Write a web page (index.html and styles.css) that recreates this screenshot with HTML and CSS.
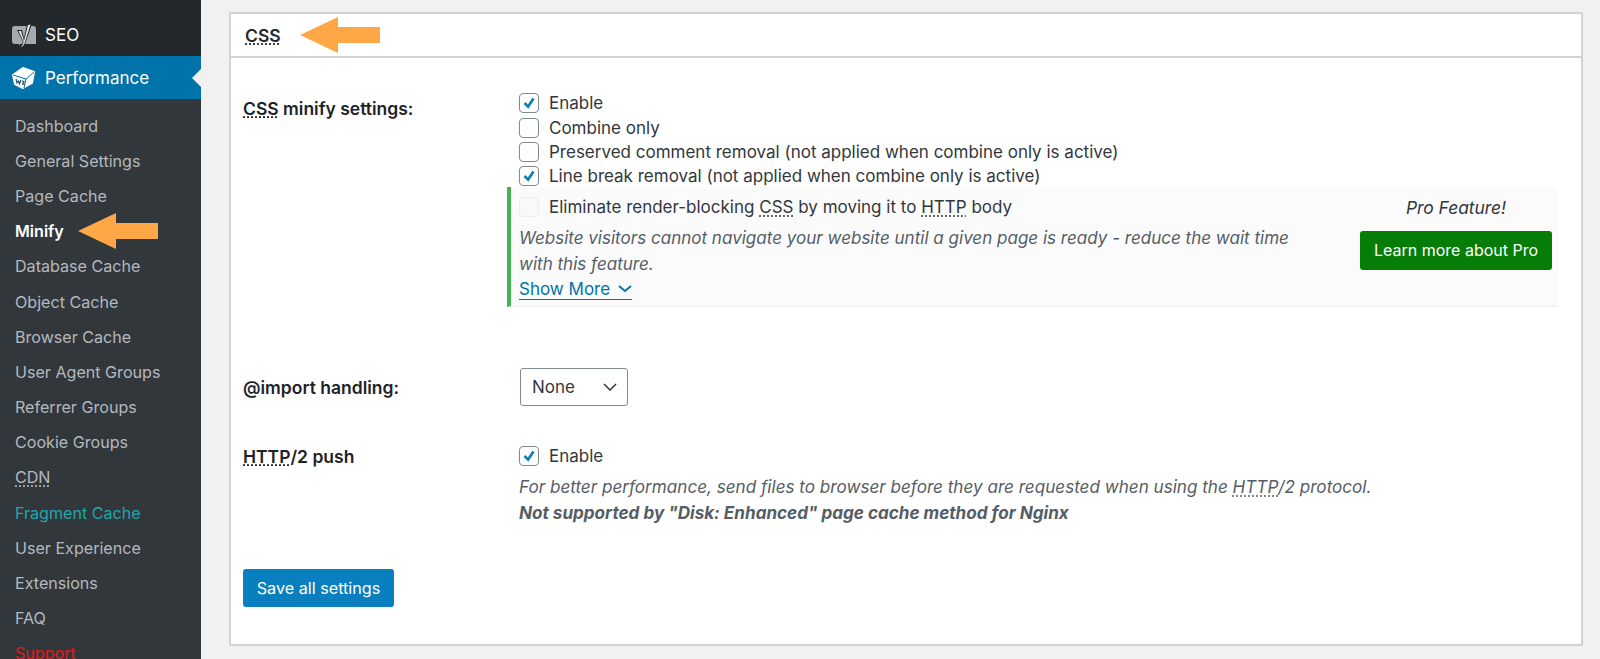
FILE: index.html
```html
<!DOCTYPE html>
<html lang="en">

<head>
    <meta charset="UTF-8">
    <meta name="viewport" content="width=device-width, initial-scale=1.0">
    <title>Minify</title>
    <link rel="stylesheet" href="styles.css">
</head>

<body>
    <div class="wrap">
        <!-- sidebar -->
        <nav class="side">
            <a href="#" class="top-item seo">
                <svg class="top-icon" viewBox="0 0 24 26" width="24" height="26">
                    <path d="M3 4h18c2 0 3 1 3 3v15H8l-1 2v-2H3c-2 0-3-1-3-3V7c0-2 1-3 3-3z" fill="#a7aaad"/>
                    <path d="M5 8h5l2 8 3-14h5l-7 20c-1 2-2 3-5 4l-1-2c2-1 3-2 4-4z" fill="#23282d"/>
                    <path d="M6.500 9h2.500l3 10 4-16 2.500-.5-6 19c-1 2-2 3-4 4 2-2 3-4 3-6z" fill="#e4e4e4"/>
                </svg>
                <span>SEO</span>
            </a>
            <a href="#" class="top-item perf">
                <svg class="top-icon" viewBox="0 0 24 24" width="24" height="24">
                    <path d="M11 2l11 4-2 11-9 5-8-4-2-9z" fill="#fff" stroke="#fff" stroke-width="2" stroke-linejoin="round"/>
                    <path d="M1 9l13 4 8-7M14 13l-2 9" fill="none" stroke="#0073aa" stroke-width="1"/>
                    <path d="M4 13l1 4 1.500-2 1 3 1.500-4M10 15l2 .5-1 1.500 1 1-2 .5" fill="none" stroke="#23506e" stroke-width="1.200"/>
                </svg>
                <span>Performance</span>
            </a>
            <ul class="sub">
                <li><a href="#">Dashboard</a></li>
                <li><a href="#">General Settings</a></li>
                <li><a href="#">Page Cache</a></li>
                <li class="current">
                    <a href="#">Minify</a>
                    <svg class="arrow" viewBox="0 0 80 36" width="80" height="36"><path d="M0 18L38 0v10h42v16H38v10z"/></svg>
                </li>
                <li><a href="#">Database Cache</a></li>
                <li><a href="#">Object Cache</a></li>
                <li><a href="#">Browser Cache</a></li>
                <li><a href="#">User Agent Groups</a></li>
                <li><a href="#">Referrer Groups</a></li>
                <li><a href="#">Cookie Groups</a></li>
                <li><a href="#"><abbr>CDN</abbr></a></li>
                <li class="teal"><a href="#">Fragment Cache</a></li>
                <li><a href="#">User Experience</a></li>
                <li><a href="#">Extensions</a></li>
                <li><a href="#">FAQ</a></li>
                <li class="red"><a href="#">Support</a></li>
            </ul>
        </nav>

        <!-- main -->
        <main class="content">
            <section class="card">
                <h2 class="card-head">
                    <abbr>CSS</abbr>
                    <svg class="arrow" viewBox="0 0 80 36" width="80" height="36"><path d="M0 18L38 0v10h42v16H38v10z"/></svg>
                </h2>
                <div class="card-body">
                    <div class="row row-minify">
                        <div class="label"><abbr>CSS</abbr> minify settings:</div>
                        <div class="field">
                            <label class="check"><span class="box on"><svg viewBox="0 0 20 20"><path d="M5 10l4 4 6-9"/></svg></span>Enable</label>
                            <label class="check"><span class="box"></span>Combine only</label>
                            <label class="check"><span class="box"></span>Preserved comment removal (not applied when combine only is active)</label>
                            <label class="check"><span class="box on"><svg viewBox="0 0 20 20"><path d="M5 10l4 4 6-9"/></svg></span>Line break removal (not applied when combine only is active)</label>
                            <div class="pro">
                                <div class="pro-main">
                                    <label class="check"><span class="box off"></span><span>Eliminate render-blocking <abbr>CSS</abbr> by moving it to <abbr>HTTP</abbr> body</span></label>
                                    <p class="desc">Website visitors cannot navigate your website until a given page is ready - reduce the wait time with this feature.</p>
                                    <a href="#" class="more">Show More <svg viewBox="0 0 14 8" width="14" height="8"><path d="M1 1l6 5 6-5"/></svg></a>
                                </div>
                                <div class="pro-side">
                                    <em>Pro Feature!</em>
                                    <a href="#" class="btn-green">Learn more about Pro</a>
                                </div>
                            </div>
                        </div>
                    </div>
                    <div class="row row-import">
                        <div class="label">@import handling:</div>
                        <div class="field">
                            <div class="select">None<svg viewBox="0 0 14 8" width="14" height="8"><path d="M1 1l6 6 6-6"/></svg></div>
                        </div>
                    </div>
                    <div class="row row-push">
                        <div class="label"><abbr>HTTP</abbr>/2 push</div>
                        <div class="field">
                            <label class="check"><span class="box on"><svg viewBox="0 0 20 20"><path d="M5 10l4 4 6-9"/></svg></span>Enable</label>
                            <p class="note">For better performance, send files to browser before they are requested when using the <abbr>HTTP</abbr>/2 protocol.</p>
                            <p class="note"><strong>Not supported by "Disk: Enhanced" page cache method for Nginx</strong></p>
                        </div>
                    </div>
                    <a href="#" class="btn-blue">Save all settings</a>
                </div>
            </section>
        </main>
    </div>
</body>

</html>
```

FILE: styles.css
```css
* {
    box-sizing: border-box;
}

html,
body {
    margin: 0;
    height: 659px;
    overflow: hidden;
}

body {
    background: #f1f1f1;
    color: #23282d;
    font-family: Inter, "Liberation Sans", sans-serif;
    font-size: 17px;
}

a {
    text-decoration: none;
}

abbr {
    text-decoration: underline dotted;
    text-underline-offset: 2px;
}

.wrap {
    display: flex;
    height: 659px;
}

/* sidebar */
.side {
    width: 201px;
    flex: none;
    background: #32373c;
    overflow: hidden;
}

.top-item {
    display: flex;
    align-items: center;
    gap: 9px;
    padding-left: 12px;
    color: #fff;
    font-size: 17px;
}

.top-icon {
    flex: none;
}

.seo {
    height: 56px;
    padding-top: 14px;
    background: #23282d;
}

.perf {
    position: relative;
    height: 43px;
    background: #0073aa;
}

.perf::after {
    content: "";
    position: absolute;
    right: 0;
    top: 13px;
    border: 9px solid transparent;
    border-left: 0;
    border-right-color: #f1f1f1;
}

.sub {
    list-style: none;
    margin: 0;
    padding: 9px 0 0 15px;
}

.sub li {
    display: flex;
    align-items: center;
    height: 35.2px;
    gap: 14px;
}

.sub a {
    color: #b4b9be;
    font-size: 16.100px;
}

.sub .current a {
    color: #fff;
    font-weight: 600;
}

.sub .teal a {
    color: #1fa7ad;
}

.sub .red a {
    color: #e3181d;
}

.arrow {
    flex: none;
    fill: #ffa647;
}

/* card */
.content {
    flex: 1;
    padding: 12px 17px 0 28px;
}

.card {
    height: 634px;
    background: #fff;
    border: 2px solid #d3d3d3;
}

.card-head {
    display: flex;
    align-items: center;
    gap: 19px;
    height: 44px;
    margin: 0;
    padding-left: 14px;
    border-bottom: 2px solid #d3d3d3;
    color: #23282d;
    font-size: 17.500px;
    font-weight: 600;
}

.card-body {
    padding: 33px 12px 0;
}

.row {
    display: flex;
}

.label {
    width: 276px;
    flex: none;
    padding-top: 7px;
    color: #1d2327;
    font-size: 17.500px;
    font-weight: 600;
}

.field {
    flex: 1;
    min-width: 0;
}

.check {
    display: flex;
    align-items: center;
    gap: 10px;
    height: 24.400px;
    color: #32373c;
}

.box {
    display: block;
    flex: none;
    width: 20px;
    height: 20px;
    background: #fff;
    border: 1px solid #7e8993;
    border-radius: 4px;
}

.box svg {
    display: block;
    width: 18px;
    height: 18px;
    fill: none;
    stroke: #0c7fb5;
    stroke-width: 3;
}

.box.off {
    background: #f9f9f9;
    border-color: #eee;
}

/* pro feature panel */
.pro {
    display: flex;
    justify-content: space-between;
    width: 1051px;
    height: 120px;
    margin: -1.600px 0 0 -12px;
    padding: 8px 6px 0 8px;
    background: #fbfbfb;
    border-left: 4px solid #46b450;
    border-bottom: 1px solid #eee;
}

.pro-main {
    width: 780px;
}

.desc {
    margin: 6px 0 0;
    color: #555d66;
    font-size: 17.050px;
    font-style: italic;
    line-height: 25.500px;
}

.more {
    display: inline-block;
    margin-top: 4px;
    color: #0073aa;
    border-bottom: 1px solid #0073aa;
    line-height: 19px;
}

.more svg,
.select svg {
    fill: none;
    stroke: #32373c;
    stroke-width: 1.500;
}

.more svg {
    margin-left: 3px;
    stroke: #0073aa;
    stroke-width: 2;
    vertical-align: 2px;
}

.pro-side {
    display: flex;
    flex-direction: column;
    align-items: center;
    gap: 13px;
    width: 192px;
    padding-top: 3px;
}

.pro-side em {
    color: #32373c;
    font-size: 17.400px;
    line-height: 20px;
}

.btn-green {
    width: 192px;
    height: 39px;
    background: #067d06;
    border-radius: 3px;
    color: #fff;
    font-size: 16px;
    line-height: 39px;
    text-align: center;
}

.row-import {
    margin-top: 61px;
}

.select {
    display: flex;
    align-items: center;
    justify-content: space-between;
    width: 108px;
    height: 38px;
    margin-left: 1px;
    padding: 0 10px 0 11px;
    border: 1px solid #7e8993;
    border-radius: 3px;
    color: #32373c;
}

.row-import .label {
    padding-top: 9px;
}

.row-push {
    margin-top: 38px;
}

.row-push .label {
    padding-top: 2px;
}

.note {
    margin: 8px 0 0;
    color: #555d66;
    font-size: 17.100px;
    font-style: italic;
    line-height: 18px;
}

.note:first-of-type {
    margin-top: 10px;
}

.btn-blue {
    display: block;
    width: 151px;
    height: 38px;
    margin-top: 47px;
    background: #0a7fc0;
    border-radius: 3px;
    color: #fff;
    font-size: 16.200px;
    line-height: 38px;
    text-align: center;
}
```
